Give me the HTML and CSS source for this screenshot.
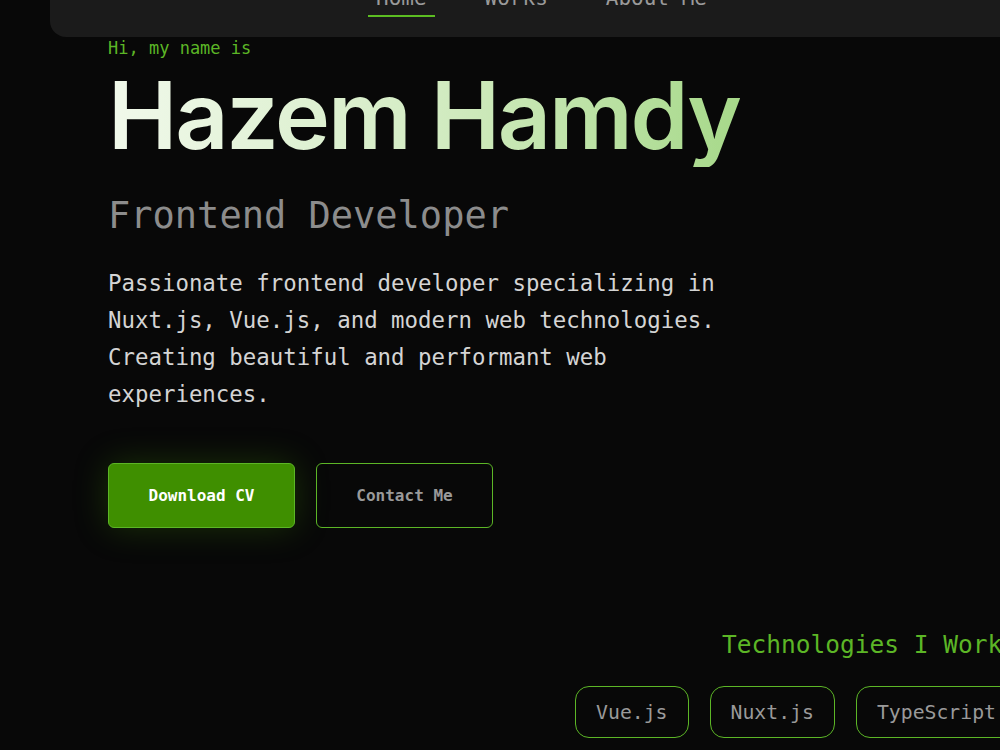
FILE: index.html
```html
<!DOCTYPE html>
<html lang="en">
<head>
    <meta charset="UTF-8">
    <meta name="viewport" content="width=device-width, initial-scale=1.0">
    <title>Hazem Hamdy — Frontend Developer</title>
    <link rel="stylesheet" href="styles.css">
</head>
<body>
    <!-- Верхняя навигация -->
    <header class="top-nav">
        <nav class="nav-links">
            <a href="#" class="nav-link active">Home</a>
            <a href="#" class="nav-link">Works</a>
            <a href="#" class="nav-link">About Me</a>
        </nav>
    </header>

    <main class="page">
        <!-- Главный блок -->
        <section class="hero">
            <p class="hero-greeting">Hi, my name is</p>
            <h1 class="hero-name">Hazem Hamdy</h1>
            <h2 class="hero-role">Frontend Developer</h2>
            <p class="hero-text">
                Passionate frontend developer specializing in Nuxt.js, Vue.js, and modern web technologies. Creating beautiful and performant web experiences.
            </p>
            <div class="hero-actions">
                <a href="#" class="btn btn-primary">Download CV</a>
                <a href="#" class="btn btn-outline">Contact Me</a>
            </div>
        </section>

        <!-- Технологии -->
        <section class="tech">
            <h3 class="tech-title">Technologies I Work With</h3>
            <ul class="tech-list">
                <li class="tech-tag">Vue.js</li>
                <li class="tech-tag">Nuxt.js</li>
                <li class="tech-tag">TypeScript</li>
                <li class="tech-tag">Tailwind CSS</li>
            </ul>
        </section>
    </main>
</body>
</html>
```

FILE: styles.css
```css
/* Общие стили */
html {
    overflow: hidden;
}

body {
    font-family: 'DejaVu Sans Mono', 'Liberation Mono', monospace;
    margin: 0;
    padding: 0;
    background-color: #080808;
    color: #d2d2d2;
    width: 1000px;
    height: 750px;
    overflow: hidden;
}

a {
    text-decoration: none;
}

/* Навигация (шапка прокручена вверх) */
.top-nav {
    position: fixed;
    top: -24px;
    left: 50px;
    width: 1000px;
    height: 61px;
    background-color: #1b1b1b;
    border-radius: 16px;
    z-index: 10;
}

.nav-links {
    display: flex;
    gap: 42px;
    padding-left: 318px;
}

.nav-link {
    position: relative;
    color: #9a9a9a;
    font-size: 21px;
    line-height: 26px;
    padding: 0 8px;
    margin-top: 9px;
}

.nav-link.active::after {
    content: "";
    position: absolute;
    left: 0;
    right: 0;
    top: 30px;
    height: 2px;
    background-color: #5cbd22;
}

/* Главный блок */
.page {
    padding-top: 38px;
}

.hero {
    padding-left: 108px;
}

.hero-greeting {
    margin: 0;
    color: #5cb626;
    font-size: 17px;
    line-height: 20px;
}

.hero-name {
    margin: 5px 0 0;
    font-family: 'Inter', 'Lato', sans-serif;
    font-weight: 600;
    font-size: 93px;
    line-height: 104px;
    letter-spacing: -2.2px;
    background: linear-gradient(90deg, #f1f9eb 0%, #d4ecc4 50%, #a7d98a 100%);
    -webkit-background-clip: text;
    background-clip: text;
    color: transparent;
    display: inline-block;
}

.hero-role {
    margin: 27px 0 0;
    color: #8c8c8c;
    font-weight: 400;
    font-size: 37px;
    line-height: 44px;
}

.hero-text {
    margin: 27px 0 0;
    max-width: 46ch;
    font-size: 22.4px;
    line-height: 37px;
    color: #d4d4d4;
}

/* Кнопки */
.hero-actions {
    display: flex;
    gap: 21px;
    margin-top: 50px;
}

.btn {
    display: flex;
    justify-content: center;
    align-items: center;
    height: 63px;
    border: 1px solid #5cb626;
    border-radius: 6px;
    font-size: 16px;
    font-weight: 700;
}

.btn-primary {
    width: 185px;
    background-color: #3f8f00;
    color: #ffffff;
    box-shadow: 0 0 34px rgba(70, 150, 0, 0.28);
}

.btn-outline {
    width: 175px;
    color: #9a9a9a;
    background-color: transparent;
}

/* Технологии */
.tech {
    width: 1798px;
    margin-top: 102px;
    display: flex;
    flex-direction: column;
    align-items: center;
}

.tech-title {
    margin: 0;
    color: #5cb626;
    font-weight: 400;
    font-size: 24.5px;
    line-height: 30px;
}

.tech-list {
    list-style: none;
    margin: 26px 0 0;
    padding: 0;
    display: flex;
    gap: 21px;
}

.tech-tag {
    height: 50px;
    padding: 0 20px;
    display: flex;
    align-items: center;
    border: 1px solid #5cb626;
    border-radius: 14px;
    color: #9a9a9a;
    font-size: 19.8px;
}
```
